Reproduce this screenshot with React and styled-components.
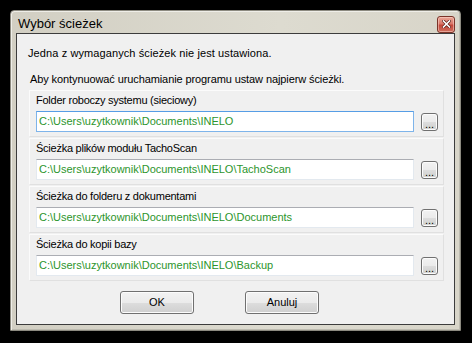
import React from "react";
import styled, { createGlobalStyle } from "styled-components";

const GlobalStyle = createGlobalStyle`
  html, body {
    margin: 0;
    background: #000000;
  }
  body {
    font-family: "Liberation Sans", Arial, sans-serif;
  }
`;

const Desktop = styled.div`
  padding: 10px 0 0 10px;
  height: 343px;
  box-sizing: border-box;
`;

const Window = styled.div`
  width: 451px;
  height: 321px;
  box-sizing: border-box;
  display: flex;
  flex-direction: column;
  border: 1px solid #8c8a80;
  border-radius: 4px 4px 0 0;
  background: linear-gradient(to right, #d2cfc3, #dddbd0 60%, #d8d5c9);
  box-shadow: inset 1px 1px 0 #efeee8, inset -1px -1px 0 #bdbbb0;
`;

const TitleBar = styled.div`
  height: 22px;
  display: flex;
  align-items: center;
  justify-content: space-between;
  padding: 0 5px 0 7px;
`;

const Title = styled.span`
  font-size: 13px;
  color: #000000;
  padding-top: 2px;
`;

const CloseButton = styled.div`
  width: 18px;
  height: 17px;
  margin-top: 4px;
  box-sizing: border-box;
  border: 1px solid #7a3328;
  border-radius: 3px;
  background: linear-gradient(to bottom, #eaa796 0%, #d9776a 45%, #c4473a 55%, #d0705f 100%);
  box-shadow: inset 0 0 0 1px rgba(255, 220, 210, 0.5);
  display: flex;
  align-items: center;
  justify-content: center;
`;

const Client = styled.div`
  flex: 1;
  margin: 0 5px 5px 5px;
  border: 1px solid #3c3c3c;
  background: #f0f0f0;
  padding: 13px 10px 0 11px;
  display: flex;
  flex-direction: column;
`;

const Message = styled.div`
  font-size: 11px;
  line-height: 13px;
  color: #000000;
  padding-left: ${(p) => p.$indent || 0}px;
  margin-top: ${(p) => p.$gap || 0}px;
  letter-spacing: ${(p) => p.$spacing || 0}px;
`;

const Groups = styled.div`
  margin: 4px 0 0 1px;
  display: flex;
  flex-direction: column;
  gap: 1px;
`;

const Group = styled.div`
  height: 47px;
  box-sizing: border-box;
  border: 1px solid #fbfbfb;
  border-right-color: #e0e0e0;
  border-bottom-color: #e0e0e0;
  padding: 3px 0 4px 6px;
`;

const Label = styled.div`
  font-size: 11px;
  line-height: 13px;
  color: #000000;
  margin-bottom: 4px;
  letter-spacing: -0.25px;
`;

const Row = styled.div`
  display: flex;
  align-items: center;
  gap: 7px;
`;

const PathBox = styled.div`
  width: 378px;
  height: 21px;
  box-sizing: border-box;
  background: #ffffff;
  border: 1px solid ${(p) => (p.$focused ? "#7eb4ea" : "#e3e9ef")};
  border-top-color: ${(p) => (p.$focused ? "#569de5" : "#abadb3")};
  padding: 0 0 0 2px;
  font-size: 11px;
  line-height: 19px;
  color: #2c952c;
  white-space: nowrap;
  overflow: hidden;
`;

const BrowseButton = styled.div`
  width: 17px;
  height: 18px;
  box-sizing: border-box;
  border: 1px solid #707070;
  border-radius: 3px;
  background: linear-gradient(to bottom, #f2f2f2 0%, #ebebeb 50%, #dddddd 51%, #cfcfcf 100%);
  box-shadow: inset 0 0 0 1px #fcfcfc;
  font-size: 11px;
  line-height: 20px;
  text-align: center;
  color: #000000;
`;

const ButtonRow = styled.div`
  display: flex;
  gap: 51px;
  margin-top: 10px;
  padding-left: 92px;
`;

const Button = styled.div`
  width: 74px;
  height: 23px;
  box-sizing: border-box;
  border: 1px solid #707070;
  border-radius: 3px;
  background: linear-gradient(to bottom, #f2f2f2 0%, #ebebeb 50%, #dddddd 51%, #cfcfcf 100%);
  box-shadow: inset 0 0 0 1px #fcfcfc;
  font-size: 11px;
  line-height: 21px;
  text-align: center;
  color: #000000;
`;

const paths = [
  { label: "Folder roboczy systemu (sieciowy)", value: "C:\\Users\\uzytkownik\\Documents\\INELO", focused: true },
  { label: "Ścieżka plików modułu TachoScan", value: "C:\\Users\\uzytkownik\\Documents\\INELO\\TachoScan" },
  { label: "Ścieżka do folderu z dokumentami", value: "C:\\Users\\uzytkownik\\Documents\\INELO\\Documents" },
  { label: "Ścieżka do kopii bazy", value: "C:\\Users\\uzytkownik\\Documents\\INELO\\Backup" },
];

export default function App() {
  return (
    <Desktop>
      <GlobalStyle />
      <Window>
        <TitleBar>
          <Title>Wybór ścieżek</Title>
          <CloseButton>
            <svg width="9" height="8" viewBox="0 0 9 8">
              <path d="M1.5 1 L7.5 7 M7.5 1 L1.5 7" stroke="#5a1e16" strokeWidth="3" strokeLinecap="square" />
              <path d="M1.5 1 L7.5 7 M7.5 1 L1.5 7" stroke="#ffffff" strokeWidth="1.6" strokeLinecap="square" />
            </svg>
          </CloseButton>
        </TitleBar>
        <Client>
          <Message $spacing={0.1}>Jedna z wymaganych ścieżek nie jest ustawiona.</Message>
          <Message $indent={2} $gap={13} $spacing={-0.1}>
            Aby kontynuować uruchamianie programu ustaw najpierw ścieżki.
          </Message>
          <Groups>
            {paths.map((p) => (
              <Group key={p.label}>
                <Label>{p.label}</Label>
                <Row>
                  <PathBox $focused={p.focused}>{p.value}</PathBox>
                  <BrowseButton>...</BrowseButton>
                </Row>
              </Group>
            ))}
          </Groups>
          <ButtonRow>
            <Button>OK</Button>
            <Button>Anuluj</Button>
          </ButtonRow>
        </Client>
      </Window>
    </Desktop>
  );
}
